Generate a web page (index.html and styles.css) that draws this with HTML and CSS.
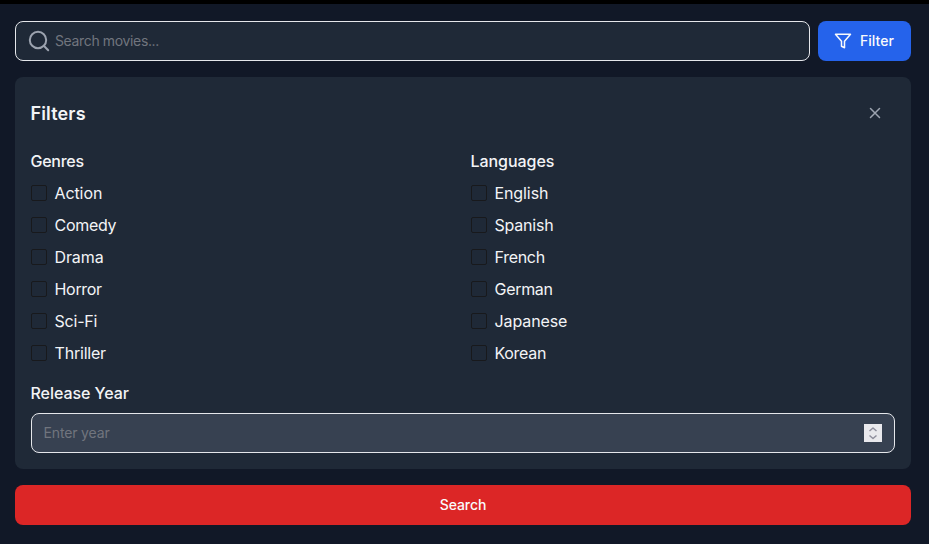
FILE: index.html
```html
<!DOCTYPE html>
<html lang="en">
<head>
<meta charset="utf-8">
<title>Movie search</title>
<link rel="stylesheet" href="styles.css">
</head>
<body>
<main class="page">
  <div class="search-row">
    <label class="field search-field">
      <svg class="search-icon" width="24" height="24" viewBox="0 0 24 24"><circle cx="11" cy="11" r="8.2"/><path d="m21.2 21.2-4.4-4.4"/></svg>
      <span class="placeholder movies">Search movies...</span>
    </label>
    <button class="button filter-button">
      <svg width="18" height="18" viewBox="0 0 24 24"><path d="M22 3H2l8 9.46V19l4 2v-8.54L22 3z"/></svg>
      <span>Filter</span>
    </button>
  </div>
  <section class="panel">
    <header class="panel-head">
      <h2>Filters</h2>
      <svg class="close" width="18" height="18" viewBox="0 0 24 24"><path d="M18 6 6 18M6 6l12 12"/></svg>
    </header>
    <div class="columns">
      <div class="column">
        <h3 class="genres">Genres</h3>
        <label class="option"><i class="box"></i><span class="action">Action</span></label>
        <label class="option"><i class="box"></i><span class="comedy">Comedy</span></label>
        <label class="option"><i class="box"></i><span class="drama">Drama</span></label>
        <label class="option"><i class="box"></i><span class="horror">Horror</span></label>
        <label class="option"><i class="box"></i><span class="scifi">Sci-Fi</span></label>
        <label class="option"><i class="box"></i><span class="thriller">Thriller</span></label>
      </div>
      <div class="column">
        <h3 class="languages">Languages</h3>
        <label class="option"><i class="box"></i><span class="english">English</span></label>
        <label class="option"><i class="box"></i><span class="spanish">Spanish</span></label>
        <label class="option"><i class="box"></i><span class="french">French</span></label>
        <label class="option"><i class="box"></i><span class="german">German</span></label>
        <label class="option"><i class="box"></i><span class="japanese">Japanese</span></label>
        <label class="option"><i class="box"></i><span class="korean">Korean</span></label>
      </div>
    </div>
    <h3 class="release">Release Year</h3>
    <div class="field year-field">
      <span class="placeholder year">Enter year</span>
      <svg class="spinner" width="18" height="18" viewBox="0 0 18 18"><path d="m5.5 7 3.5-3 3.5 3M5.5 11.5l3.5 3 3.5-3"/></svg>
    </div>
  </section>
  <button class="button search-button"><span>Search</span></button>
</main>
</body>
</html>
```
FILE: styles.css
```css
* { box-sizing: border-box; }
body {
  margin: 0;
  height: 544px;
  overflow: hidden;
  border-top: 4px solid #000;
  background: #111827;
  color: #f3f4f6;
  font: 16px/24px Inter, "Liberation Sans", sans-serif;
}
.page {
  display: flex;
  flex-direction: column;
  gap: 16px;
  padding: 17px 18px 0 15px;
}
svg {
  flex: none;
  fill: none;
  stroke: currentColor;
  stroke-width: 2;
  stroke-linecap: round;
  stroke-linejoin: round;
}
.search-row { display: flex; gap: 8px; }
.field {
  display: flex;
  align-items: center;
  height: 40px;
  border: 1px solid #e5e7eb;
  border-radius: 8px;
  font-size: 14px;
  line-height: 20px;
}
.search-field { flex: 1; gap: 4px; padding-left: 11px; background: #1f2937; }
.search-icon { color: #9ca3af; }
.placeholder { color: #71757e; }
.movies { letter-spacing: -0.36px; }
.year { margin-left: -0.5px; letter-spacing: -0.15px; }
.button {
  display: flex;
  align-items: center;
  justify-content: center;
  gap: 8px;
  height: 40px;
  padding: 0;
  border: 0;
  border-radius: 8px;
  color: #f9fafb;
  font: 500 14px/20px Inter, "Liberation Sans", sans-serif;
}
.filter-button { width: 93px; padding-right: 1px; background: #2563eb; }
.filter-button span { letter-spacing: 0.05px; }
.search-button { background: #dc2626; }
.search-button span { letter-spacing: -0.1px; }
.panel {
  height: 392px;
  padding: 16px;
  border-radius: 8px;
  background: #1f2937;
}
.panel-head {
  display: flex;
  align-items: center;
  justify-content: space-between;
  height: 40px;
  padding-right: 11px;
}
.close { color: #9ca3af; }
h2, h3 { margin: 0 0 0 -0.5px; }
h2 { padding-top: 2px; font-size: 18px; line-height: 28px; font-weight: 600; letter-spacing: 0.15px; }
h3 { width: max-content; font-size: 16px; line-height: 24px; font-weight: 500; }
.columns {
  display: grid;
  grid-template-columns: 1fr 1fr;
  gap: 16px;
  margin: 16px 0;
}
.column { display: flex; flex-direction: column; gap: 8px; }
.option { display: flex; align-items: center; gap: 7.5px; height: 24px; }
.genres { letter-spacing: -0.25px; }
.languages { letter-spacing: -0.05px; }
.release { letter-spacing: -0.05px; }
.action, .drama, .japanese { letter-spacing: -0.1px; }
.comedy { letter-spacing: -0.3px; }
.horror, .french, .german, .korean { letter-spacing: -0.3px; }
.scifi { letter-spacing: -0.2px; }
.thriller { letter-spacing: -0.2px; }
.english { letter-spacing: -0.1px; }
.spanish { letter-spacing: -0.2px; }
.box {
  width: 16px;
  height: 16px;
  border: 1px solid #18191c;
  border-radius: 2px;
}
.year-field {
  justify-content: space-between;
  margin-top: 8px;
  padding: 0 12px;
  background: #374151;
}
.spinner { background: #e9e9ed; color: #8f8f9d; stroke-width: 1.5; stroke-linecap: butt; }
```
